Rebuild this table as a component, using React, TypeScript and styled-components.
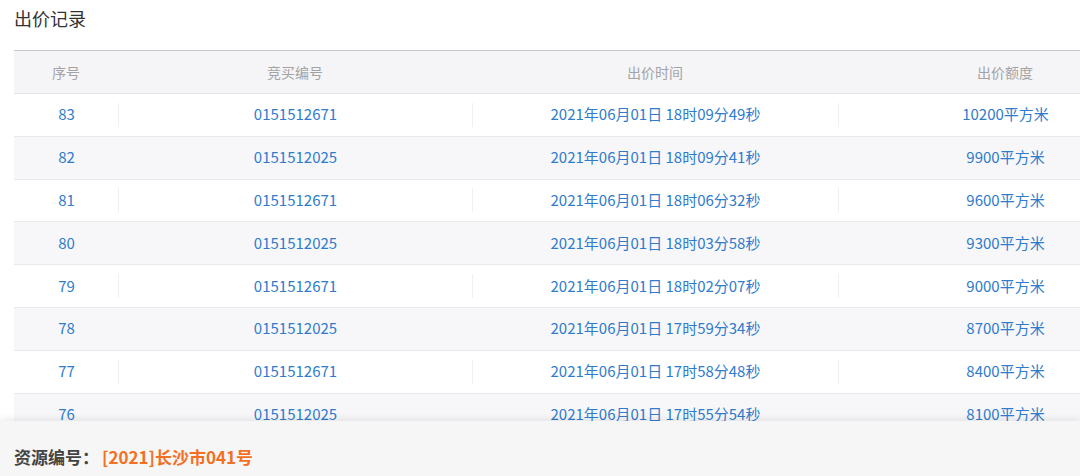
import React from "react";
import styled, { createGlobalStyle } from "styled-components";

const Global = createGlobalStyle`
  html, body { margin: 0; padding: 0; background: #fff; overflow: hidden; }
  body { font-family: "Noto Sans CJK SC", "Noto Sans", sans-serif; }
  * { box-sizing: border-box; }
`;

const Page = styled.div`
  width: 1080px;
  height: 476px;
  overflow: hidden;
  position: relative;
`;

const Title = styled.h2`
  margin: 6px 0 20px 14px;
  font-size: 18px;
  line-height: 24px;
  font-weight: 400;
  color: #333;
`;

const Table = styled.div`
  margin-left: 14px;
  width: 1158px;
  display: flex;
  flex-direction: column;
`;

const cols = "104px 354px 366px 334px";

const HeadRow = styled.div`
  display: grid;
  grid-template-columns: ${cols};
  height: 44px;
  align-items: center;
  background: #f5f5f7;
  border-top: 1px solid #c9c9cc;
  border-bottom: 1px solid #e2e2e5;
`;

const HeadCell = styled.div`
  text-align: center;
  font-size: 14px;
  color: #a3a3a6;
`;

const Row = styled.div<{ $alt: boolean }>`
  display: grid;
  grid-template-columns: ${cols};
  height: 42.8px;
  align-items: center;
  background: ${(p) => (p.$alt ? "#f7f7f9" : "#fff")};
  border-bottom: 1px solid #e9e9ec;
`;

const Cell = styled.div<{ $sep: boolean }>`
  height: 24px;
  display: flex;
  align-items: center;
  justify-content: center;
  padding-bottom: 2px;
  font-size: 15px;
  color: #2f7bcc;
  border-left: 1px solid ${(p) => (p.$sep ? "#f0f0f2" : "transparent")};
  &:first-child { border-left-color: transparent; }
`;

const Footer = styled.div`
  position: absolute;
  left: 0;
  right: 0;
  bottom: 0;
  height: 55px;
  background: #f6f6f7;
  box-shadow: 0 -3px 6px rgba(0, 0, 0, 0.07);
  padding: 25px 0 0 14px;
  font-size: 17px;
  line-height: 22px;
  font-weight: 700;
  color: #444;
`;

const Highlight = styled.span`
  margin-left: 3px;
  color: #f2701f;
`;

const data: [number, string, string, string][] = [
  [83, "0151512671", "2021年06月01日 18时09分49秒", "10200平方米"],
  [82, "0151512025", "2021年06月01日 18时09分41秒", "9900平方米"],
  [81, "0151512671", "2021年06月01日 18时06分32秒", "9600平方米"],
  [80, "0151512025", "2021年06月01日 18时03分58秒", "9300平方米"],
  [79, "0151512671", "2021年06月01日 18时02分07秒", "9000平方米"],
  [78, "0151512025", "2021年06月01日 17时59分34秒", "8700平方米"],
  [77, "0151512671", "2021年06月01日 17时58分48秒", "8400平方米"],
  [76, "0151512025", "2021年06月01日 17时55分54秒", "8100平方米"],
];

export default function App() {
  return (
    <Page>
      <Global />
      <Title>出价记录</Title>
      <Table>
        <HeadRow>
          <HeadCell>序号</HeadCell>
          <HeadCell>竞买编号</HeadCell>
          <HeadCell>出价时间</HeadCell>
          <HeadCell>出价额度</HeadCell>
        </HeadRow>
        {data.map((r, i) => (
          <Row key={r[0]} $alt={i % 2 === 1}>
            {r.map((v, j) => (
              <Cell key={j} $sep={i % 2 === 0}>
                {v}
              </Cell>
            ))}
          </Row>
        ))}
      </Table>
      <Footer>
        资源编号：<Highlight>[2021]长沙市041号</Highlight>
      </Footer>
    </Page>
  );
}
